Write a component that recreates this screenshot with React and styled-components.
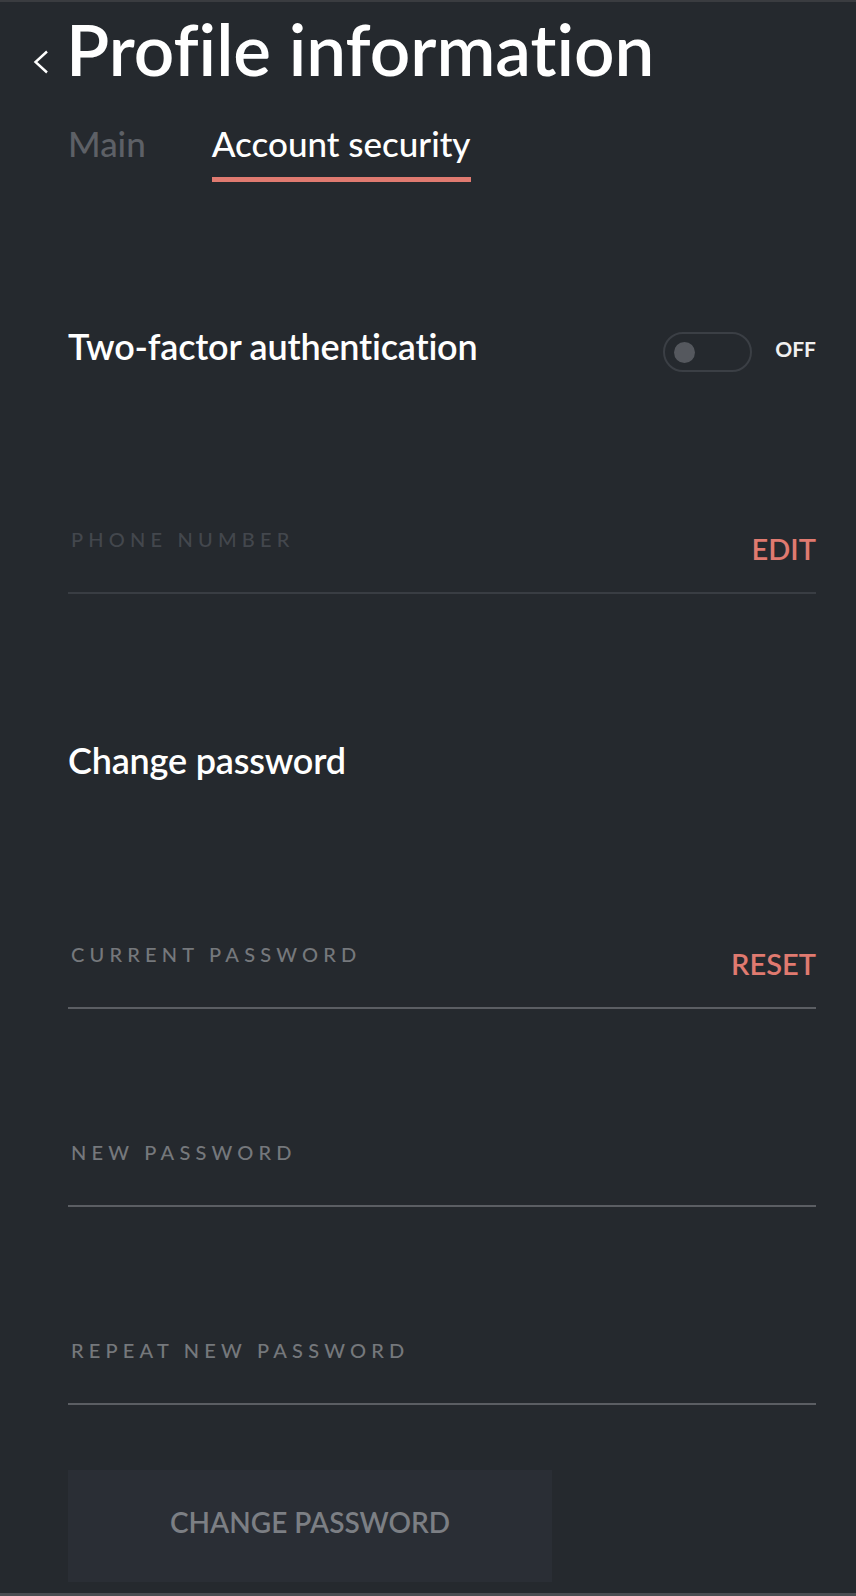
import React from 'react'
import styled, { createGlobalStyle } from 'styled-components'

const Global = createGlobalStyle`
  html, body {
    margin: 0;
    padding: 0;
    background: #25292e;
  }
  body {
    font-family: Lato, "Open Sans", sans-serif;
    font-variant-ligatures: none;
    -webkit-font-smoothing: antialiased;
  }
`

const Page = styled.div`
  box-sizing: border-box;
  min-height: 1596px;
  background: #25292e;
  border-top: 2px solid #3a3c40;
  border-bottom: 3px solid #4a4d52;
`

const Header = styled.header`
  display: flex;
  align-items: flex-start;
  padding: 11px 0 0 33px;
  gap: 17px;
`

const Back = styled.svg`
  margin-top: 37px;
  flex: none;
`

const Title = styled.h1`
  margin: 0;
  font-size: 71px;
  line-height: 72px;
  font-weight: 600;
  color: #ffffff;
`

const Content = styled.main`
  width: 748px;
  margin-left: 68px;
`

const Tabs = styled.nav`
  display: flex;
  gap: 66px;
  margin-top: 41px;
`

const Tab = styled.div`
  font-size: 35px;
  line-height: 35px;
  font-weight: 500;
  padding-bottom: 16px;
  color: ${p => (p.$active ? '#ffffff' : '#5d6066')};
  border-bottom: 5px solid ${p => (p.$active ? '#e07a70' : 'transparent')};
`

const Row = styled.div`
  display: flex;
  justify-content: space-between;
  align-items: flex-start;
  margin-top: ${p => p.$top}px;
`

const Heading = styled.h2`
  margin: 0;
  font-size: 36px;
  line-height: 37px;
  font-weight: 600;
  letter-spacing: -0.2px;
  color: #ffffff;
  margin-top: ${p => p.$top || 0}px;
`

const SwitchWrap = styled.div`
  display: flex;
  align-items: flex-start;
  gap: 23px;
  margin-top: 4px;
`

const Track = styled.div`
  box-sizing: border-box;
  width: 89px;
  height: 40px;
  border: 2px solid #3b3f45;
  border-radius: 20px;
  display: flex;
  align-items: center;
  padding-left: 9px;
`

const Knob = styled.span`
  width: 21px;
  height: 21px;
  border-radius: 50%;
  background: #55585e;
`

const SwitchText = styled.span`
  margin-top: 6px;
  font-size: 21px;
  line-height: 21px;
  font-weight: 700;
  color: #f0f0f0;
`

const Field = styled.div`
  display: flex;
  justify-content: space-between;
  align-items: flex-start;
  height: 63px;
  margin-top: ${p => p.$top}px;
  border-bottom: 2px solid ${p => (p.$dim ? '#393d43' : '#5b5e63')};
`

const Label = styled.span`
  padding-left: 3px;
  font-size: 20px;
  line-height: 20px;
  font-weight: 500;
  letter-spacing: 5.2px;
  color: ${p => (p.$dim ? '#43474d' : '#75787c')};
`

const Action = styled.button`
  margin-top: 5px;
  padding: 0;
  border: none;
  background: none;
  font-family: inherit;
  font-size: 29px;
  line-height: 29px;
  font-weight: 600;
  color: #e07a70;
  cursor: pointer;
`

const Submit = styled.button`
  display: flex;
  align-items: center;
  justify-content: center;
  width: 484px;
  height: 112px;
  margin-top: 65px;
  padding: 0 0 8px;
  border: none;
  background: #2a2e35;
  font-family: inherit;
  font-size: 28px;
  line-height: 28px;
  font-weight: 600;
  color: #7c7f84;
`

const App = () => (
  <Page>
    <Global />
    <Header>
      <Back width="16" height="24" viewBox="0 0 16 24">
        <polyline points="14,1.5 2.5,12 14,22.5" fill="none" stroke="#fff" strokeWidth="2.4" />
      </Back>
      <Title>Profile information</Title>
    </Header>
    <Content>
      <Tabs>
        <Tab>Main</Tab>
        <Tab $active>Account security</Tab>
      </Tabs>
      <Row $top={146}>
        <Heading>Two-factor authentication</Heading>
        <SwitchWrap>
          <Track>
            <Knob />
          </Track>
          <SwitchText>OFF</SwitchText>
        </SwitchWrap>
      </Row>
      <Field $top={157} $dim>
        <Label $dim>PHONE NUMBER</Label>
        <Action>EDIT</Action>
      </Field>
      <Heading $top={148}>Change password</Heading>
      <Field $top={165}>
        <Label>CURRENT PASSWORD</Label>
        <Action>RESET</Action>
      </Field>
      <Field $top={133}>
        <Label>NEW PASSWORD</Label>
      </Field>
      <Field $top={133}>
        <Label>REPEAT NEW PASSWORD</Label>
      </Field>
      <Submit>CHANGE PASSWORD</Submit>
    </Content>
  </Page>
)

export default App
